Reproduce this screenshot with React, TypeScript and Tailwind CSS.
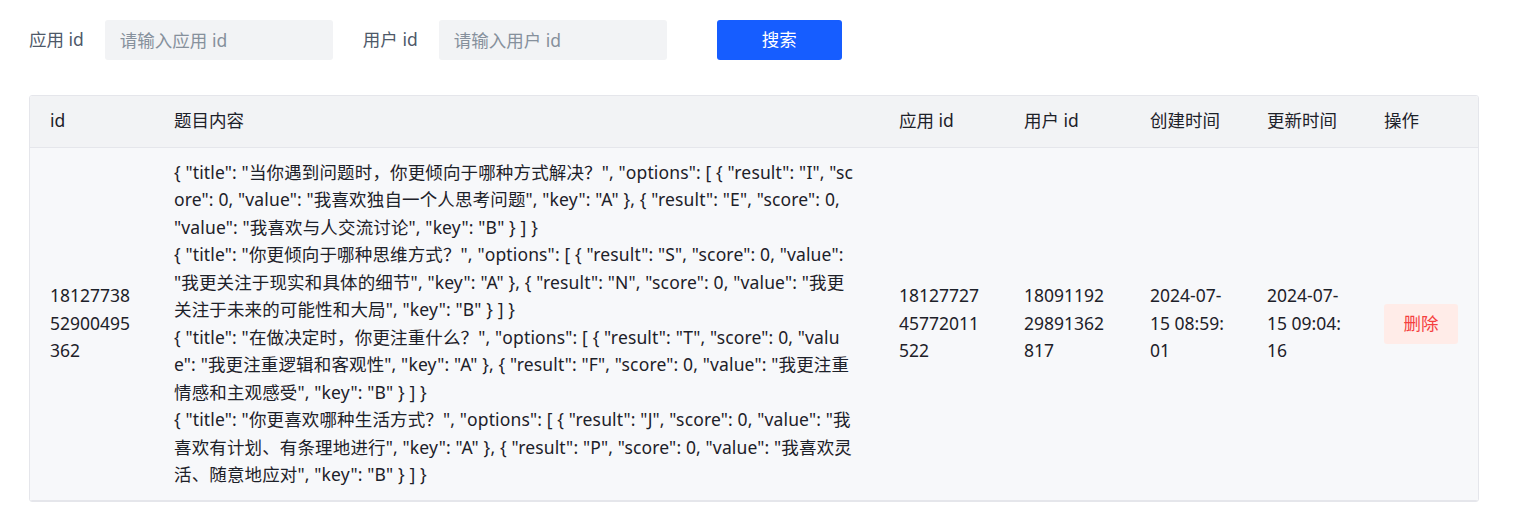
const questions = [
  '{ "title": "当你遇到问题时，你更倾向于哪种方式解决？", "options": [ { "result": "I", "score": 0, "value": "我喜欢独自一个人思考问题", "key": "A" }, { "result": "E", "score": 0, "value": "我喜欢与人交流讨论", "key": "B" } ] }',
  '{ "title": "你更倾向于哪种思维方式？", "options": [ { "result": "S", "score": 0, "value": "我更关注于现实和具体的细节", "key": "A" }, { "result": "N", "score": 0, "value": "我更关注于未来的可能性和大局", "key": "B" } ] }',
  '{ "title": "在做决定时，你更注重什么？", "options": [ { "result": "T", "score": 0, "value": "我更注重逻辑和客观性", "key": "A" }, { "result": "F", "score": 0, "value": "我更注重情感和主观感受", "key": "B" } ] }',
  '{ "title": "你更喜欢哪种生活方式？", "options": [ { "result": "J", "score": 0, "value": "我喜欢有计划、有条理地进行", "key": "A" }, { "result": "P", "score": 0, "value": "我喜欢灵活、随意地应对", "key": "B" } ] }',
]

const rows = [
  {
    id: "1812773852900495362",
    questions,
    appId: "1812772745772011522",
    userId: "1809119229891362817",
    createTime: "2024-07-15 08:59:01",
    updateTime: "2024-07-15 09:04:16",
  },
]

const columns = ["id", "题目内容", "应用 id", "用户 id", "创建时间", "更新时间", "操作"]
const widths = ["w-[124px]", "w-[725px]", "w-[125px]", "w-[126px]", "w-[117px]", "w-[117px]", "w-[116px]"]

function Field({ label, placeholder }: { label: string; placeholder: string }) {
  return (
    <div className="flex items-center">
      <label className="mr-[21px] text-[#4e5969]">{label}</label>
      <input
        className="h-10 w-[228px] rounded-[3px] bg-[#f2f3f5] px-[15px] text-[#1d2129] outline-none placeholder:text-[#86909c]"
        placeholder={placeholder}
      />
    </div>
  )
}

export default function App() {
  return (
    <div
      className="min-h-screen bg-white px-[29px] pt-5 text-[17.5px] leading-[27.5px] text-[#1d2129]"
      style={{ fontFamily: '"Noto Sans", "Noto Sans CJK SC", sans-serif' }}
    >
      <form className="flex items-center" onSubmit={(e) => e.preventDefault()}>
        <Field label="应用 id" placeholder="请输入应用 id" />
        <div className="ml-[30px]">
          <Field label="用户 id" placeholder="请输入用户 id" />
        </div>
        <button
          type="submit"
          className="ml-[50px] h-10 w-[125px] rounded-[3px] bg-[#165dff] text-white"
        >
          搜索
        </button>
      </form>

      <div className="mt-[35px] w-[1450px] overflow-hidden rounded-[3px] border border-[#e5e6eb]">
        <table className="w-full table-fixed border-collapse text-left">
          <colgroup>
            {widths.map((w, i) => (
              <col key={i} className={w} />
            ))}
          </colgroup>
          <thead>
            <tr className="bg-[#f2f3f5]">
              {columns.map((c) => (
                <th key={c} className="h-[51px] border-b border-[#e5e6eb] px-5 pb-px font-normal">
                  {c}
                </th>
              ))}
            </tr>
          </thead>
          <tbody>
            {rows.map((r) => (
              <tr key={r.id} className="bg-[#f7f8fa]">
                <td className="border-b border-[#e5e6eb] px-5 py-[11px] break-all">{r.id}</td>
                <td className="border-b border-[#e5e6eb] px-5 py-[11px] break-all tracking-[0.14px]">
                  {r.questions.map((q, i) => (
                    <div key={i}>{q}</div>
                  ))}
                </td>
                <td className="border-b border-[#e5e6eb] px-5 py-[11px] break-all">{r.appId}</td>
                <td className="border-b border-[#e5e6eb] px-5 py-[11px] break-all">{r.userId}</td>
                <td className="border-b border-[#e5e6eb] px-5 py-[11px] break-all">{r.createTime}</td>
                <td className="border-b border-[#e5e6eb] px-5 py-[11px] break-all">{r.updateTime}</td>
                <td className="border-b border-[#e5e6eb] px-5 py-[11px]">
                  <button className="h-10 w-[74px] rounded-[3px] bg-[#ffece8] text-[#f53f3f]">删除</button>
                </td>
              </tr>
            ))}
          </tbody>
        </table>
      </div>
    </div>
  )
}
